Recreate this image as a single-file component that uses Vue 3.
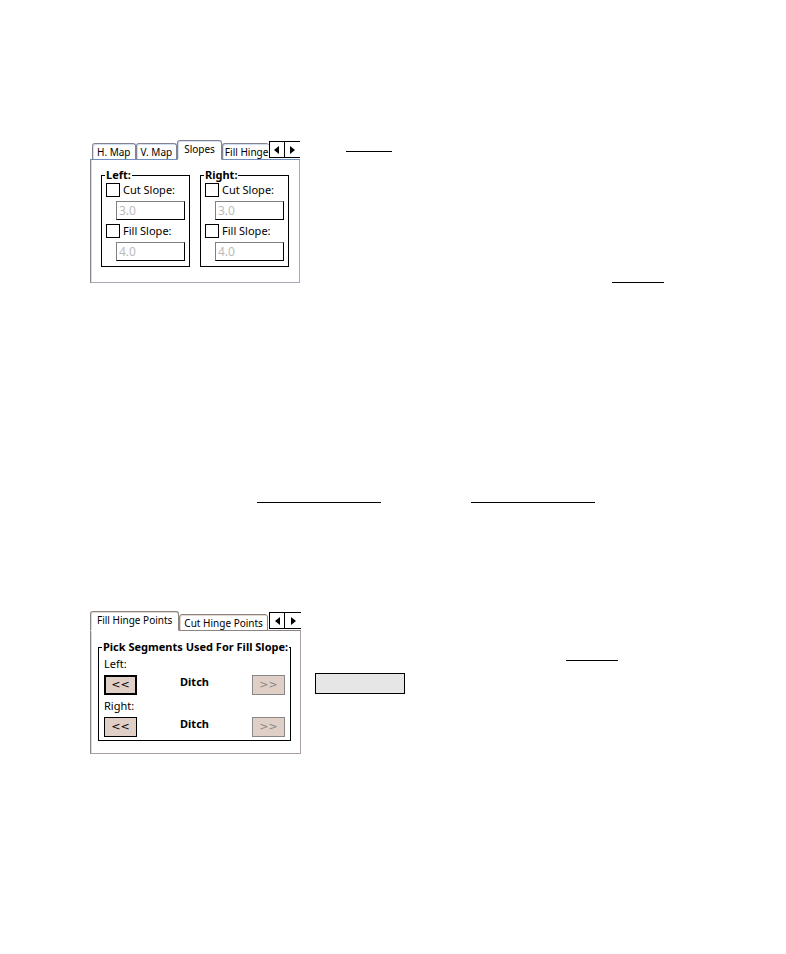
<script setup>
import { ref } from "vue";

const slopeTabs = ["H. Map", "V. Map", "Slopes", "Fill Hinge"];
const hingeTabs = ["Fill Hinge Points", "Cut Hinge Points"];

const slopeTab = ref("Slopes");
const hingeTab = ref("Fill Hinge Points");

const sides = ref([
  { name: "Left", cut: false, fill: false, cutSlope: "3.0", fillSlope: "4.0" },
  { name: "Right", cut: false, fill: false, cutSlope: "3.0", fillSlope: "4.0" },
]);

const segments = [
  { side: "Left", segment: "Ditch", focused: true },
  { side: "Right", segment: "Ditch", focused: false },
];
</script>

<template>
  <main class="page">
    <section class="row">
      <div class="panel panel-blue">
        <div class="tabs">
          <div class="tab-strip">
            <button
              v-for="t in slopeTabs"
              :key="t"
              type="button"
              class="tab"
              :class="{ active: t === slopeTab }"
              @click="slopeTab = t"
            >{{ t }}</button>
          </div>
          <div class="arrows">
            <button type="button" aria-label="Previous tab">
              <svg width="5" height="8" viewBox="0 0 5 8"><path d="M5 0v8L0 4z" /></svg>
            </button>
            <button type="button" aria-label="Next tab">
              <svg width="5" height="8" viewBox="0 0 5 8"><path d="M0 0v8l5-4z" /></svg>
            </button>
          </div>
        </div>
        <div class="body slopes">
          <fieldset v-for="s in sides" :key="s.name">
            <legend>{{ s.name }}:</legend>
            <div class="fields">
              <label class="check"><input v-model="s.cut" type="checkbox" />Cut Slope:</label>
              <input v-model="s.cutSlope" class="value" type="text" :aria-label="s.name + ' cut slope'" :disabled="!s.cut" />
              <label class="check"><input v-model="s.fill" type="checkbox" />Fill Slope:</label>
              <input v-model="s.fillSlope" class="value" type="text" :aria-label="s.name + ' fill slope'" :disabled="!s.fill" />
            </div>
          </fieldset>
        </div>
      </div>
      <div class="aside">
        <span class="rule short"></span>
        <span class="rule last"></span>
      </div>
    </section>

    <section class="rules">
      <span class="rule long"></span>
      <span class="rule long"></span>
    </section>

    <section class="row">
      <div class="panel panel-tan">
        <div class="tabs">
          <div class="tab-strip">
            <button
              v-for="t in hingeTabs"
              :key="t"
              type="button"
              class="tab"
              :class="{ active: t === hingeTab }"
              @click="hingeTab = t"
            >{{ t }}</button>
          </div>
          <div class="arrows">
            <button type="button" aria-label="Previous tab">
              <svg width="5" height="8" viewBox="0 0 5 8"><path d="M5 0v8L0 4z" /></svg>
            </button>
            <button type="button" aria-label="Next tab">
              <svg width="5" height="8" viewBox="0 0 5 8"><path d="M0 0v8l5-4z" /></svg>
            </button>
          </div>
        </div>
        <div class="body hinges">
          <fieldset>
            <legend>Pick Segments Used For Fill Slope:</legend>
            <div class="segments">
              <div v-for="s in segments" :key="s.side">
                <span class="side">{{ s.side }}:</span>
                <div class="picker">
                  <button type="button" class="step" :class="{ focused: s.focused }">&lt;&lt;</button>
                  <strong>{{ s.segment }}</strong>
                  <button type="button" class="step" disabled>&gt;&gt;</button>
                </div>
              </div>
            </div>
          </fieldset>
        </div>
      </div>
      <div class="aside lower">
        <span class="rule last"></span>
        <span class="box"></span>
      </div>
    </section>
  </main>
</template>

<style>
body {
  margin: 0;
  background: #fff;
}
</style>

<style scoped>
.page {
  padding: 140px 90px 200px;
  font: 11px/14px "Noto Sans", sans-serif;
  color: #000;
}

button,
input {
  box-sizing: border-box;
  margin: 0;
  padding: 0;
  font: inherit;
  color: inherit;
  border-radius: 0;
}

.row {
  display: flex;
}

.panel {
  flex: none;
  width: 210px;
}
.panel-blue {
  --edge: #a8a8b8;
  --tab-edge: #848490;
  --line: #6f8fc0;
  --tint: #d0e0f4;
}
.panel-tan {
  --edge: #aaa29e;
  --tab-edge: #8c8480;
  --line: #8c8480;
  --tint: #e4d8d0;
  width: 211px;
}

.tabs {
  display: flex;
  align-items: flex-start;
  height: 20px;
}
.tab-strip {
  flex: 1;
  display: flex;
  align-items: flex-end;
  min-width: 0;
  height: 20px;
  overflow: hidden;
  box-shadow: inset 0 -1px var(--line);
}
.panel-blue .tab-strip {
  padding-left: 2px;
}
.tab {
  flex: none;
  height: 17px;
  padding: 0 4px;
  font-size: 10px;
  white-space: nowrap;
  background: #fff;
  border: 1px solid var(--tab-edge);
  border-bottom-color: var(--line);
  border-radius: 3px 3px 0 0;
  box-shadow: inset 1px 1px var(--tint);
}
.tab.active {
  height: 20px;
  padding: 0 6px 2px;
  border-bottom-color: #fff;
}
.panel-blue .tab:last-child {
  padding: 0 1px 0 2px;
  border-right: 0;
}
.arrows {
  display: flex;
  flex: none;
  width: 31px;
  height: 20px;
  box-sizing: border-box;
  padding-top: 1px;
  border-bottom: 1px solid var(--line);
}
.panel-tan .arrows {
  width: 32px;
}
.arrows button {
  display: flex;
  align-items: center;
  justify-content: center;
  width: 16px;
  height: 17px;
  background: #fff;
  border: 1px solid #000;
}
.arrows button + button {
  border-left: 0;
  border-right: 0;
}

.body {
  box-sizing: border-box;
  border: 1px solid var(--edge);
  border-top: 0;
  border-left-color: var(--tab-edge);
  box-shadow: inset 1px 0 var(--tint);
}
.slopes {
  display: flex;
  gap: 10px;
  padding: 8px 10px 15px;
}
.slopes fieldset {
  flex: 1;
}
.hinges {
  padding: 9px 9px 12px 7px;
}

fieldset {
  min-width: 0;
  margin: 0;
  padding: 1px 4px 5px;
  border: 1px solid #000;
}
legend {
  margin-left: -1px;
  padding: 0 1px;
  font-weight: 700;
  white-space: nowrap;
}

.fields {
  display: flex;
  flex-direction: column;
  gap: 4px;
}
.check {
  display: flex;
  align-items: center;
  gap: 3px;
  white-space: nowrap;
}
.check input {
  appearance: none;
  flex: none;
  width: 14px;
  height: 14px;
  background: #fff;
  border: 1px solid #000;
}
.check input:checked {
  background: #000;
}
.value {
  width: auto;
  min-width: 0;
  height: 19px;
  margin-left: 10px;
  padding: 0 2px;
  font-size: 12px;
  background: #fff;
  border: 1px solid #000;
}
.value:disabled {
  color: #bbb;
  border-color: #808080 #000 #000 #808080;
}

.hinges fieldset {
  padding: 3px 4px;
}
.hinges legend {
  margin-left: -1px;
}
.segments {
  display: flex;
  flex-direction: column;
  gap: 4px;
  padding: 0 1px;
}
.side {
  display: block;
  margin-bottom: 4px;
}
.picker {
  display: flex;
  justify-content: space-between;
}
.step {
  width: 33px;
  height: 20px;
  font-family: "DejaVu Sans", sans-serif;
  background: #dfcfc7;
  border: 1px solid #000;
}
.step.focused {
  border-width: 2px;
}
.step:disabled {
  color: #888;
  border-color: #888;
}

.aside {
  flex: 1;
  display: flex;
  flex-direction: column;
  justify-content: space-between;
  padding: 11px 32px 0 46px;
}
.aside.lower {
  justify-content: flex-start;
  gap: 12px;
  padding: 49px 78px 0 14px;
}
.rule {
  height: 1px;
  background: #000;
}
.rule.short {
  width: 46px;
}
.rule.last {
  width: 52px;
  align-self: flex-end;
}
.rule.long {
  width: 124px;
}
.box {
  box-sizing: border-box;
  width: 90px;
  height: 21px;
  background: #e6e6e6;
  border: 1px solid #000;
}

.rules {
  display: flex;
  gap: 90px;
  padding: 219px 0 108px 167px;
}
</style>
